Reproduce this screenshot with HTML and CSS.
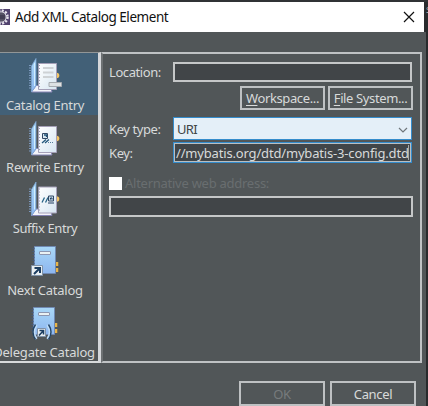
FILE: index.html
```html
<!DOCTYPE html>
<html lang="en">
<head>
<meta charset="utf-8">
<title>Add XML Catalog Element</title>
<link rel="stylesheet" href="styles.css">
</head>
<body>
<svg class="defs" width="0" height="0" aria-hidden="true">
  <defs>
    <linearGradient id="cover" x1="0" y1="0" x2="0" y2="1"><stop offset="0" stop-color="#a9d8f8"/><stop offset="1" stop-color="#8db6ef"/></linearGradient>
    <linearGradient id="paper" x1="0" y1="0" x2="1" y2="1"><stop offset="0" stop-color="#fff"/><stop offset="1" stop-color="#d7e6f2"/></linearGradient>
    <g id="open-book">
      <path d="M8.500 35 13 28.500H27L29 35z" fill="#f4f4fa" stroke="#8584b4"/>
      <path d="M8.500 9 13 1.500V29L8.500 35z" fill="url(#cover)" stroke="#7fa6d2" stroke-width=".8"/>
      <path d="M11.500 6V29" stroke="#d1efff"/>
      <path d="M7 8V33" stroke="#7e9ac0" stroke-width="2" stroke-dasharray="1 1.500"/>
      <circle cx="33.500" cy="18.500" r="2.800" fill="#f3c566"/>
      <path d="M15.500 6.500H33.500V32.500H15.500z" fill="url(#paper)" stroke="#a5a0b8"/>
      <path d="M16 8V31" stroke="#a3a2b7" stroke-width="2" stroke-dasharray="1 2"/>
    </g>
    <g id="closed-book">
      <path d="M34 20V30" stroke="#e9b447" stroke-width="2.500" stroke-dasharray="4 2"/>
      <path d="M11.500 4.500H32.500V31.500H11.500z" fill="url(#cover)" stroke="#7089b2"/>
      <path d="M10.500 6V30" stroke="#465b79" stroke-width="2" stroke-dasharray="1 2"/>
      <rect x="16.500" y="9.500" width="11" height="3" rx=".5" fill="#e9f1f3" stroke="#8c96b0"/>
    </g>
  </defs>
</svg>
<div class="screen">
  <div class="dialog">
    <header class="titlebar">
      <svg class="app-icon" width="10" height="16" viewBox="0 0 10 16"><path fill="#51426e" d="M0 0H10V16H0z"/><circle cx="1" cy="8" r="6.500" fill="none" stroke="#e8e6ed" stroke-width="2.500" stroke-dasharray="2 1.400"/><circle cx="1" cy="8" r="5.200" fill="#565365" stroke="#d4d0dc"/><path d="M0 7H5M0 9H5" stroke="#302a43"/></svg>
      <span class="title">Add XML Catalog Element</span>
      <svg class="close" width="12" height="12" viewBox="0 0 12 12"><path d="M1 1 11 11M11 1 1 11" stroke="#111" stroke-width="1.200"/></svg>
    </header>
    <main class="content">
      <nav class="sidebar">
        <div class="item selected"><svg width="42" height="39" viewBox="0 0 42 39"><use href="#open-book"/><path d="M20 11H30.500M20 15.500H30.500M20 20H30.500" stroke="#ced2d5" stroke-width="2"/><path d="M26 25.500H38.500V29.500H26z" fill="#dde1e4" stroke="#a6abb0"/></svg><span class="t-catalog">Catalog Entry</span></div>
        <div class="item"><svg width="42" height="39" viewBox="0 0 42 39"><g transform="translate(0 1)"><use href="#open-book"/><path d="M19.500 13.500H24.500V18.500H19.500z" fill="#d8e6ef" stroke="#334965"/><path d="M21 15H23.500V17M19 23 23 19.500M22 23 26 19.500" fill="none" stroke="#23577c" stroke-width="1.300"/><path d="M25 22.500H31" stroke="#577e9c" stroke-dasharray="1 1"/></g></svg><span class="t-rewrite">Rewrite Entry</span></div>
        <div class="item"><svg width="42" height="39" viewBox="0 0 42 39"><g transform="translate(0 .5)"><use href="#open-book"/><path d="M19 22 21.500 17M22.500 22 25 17" stroke="#286487" stroke-width="1.300"/><path d="M25.500 15.500H30.500V20.500H25.500z" fill="#c7dce9" stroke="#334965"/><path d="M27.500 19V17.500H29V19M25 22.500H31" fill="none" stroke="#203d61"/></g></svg><span class="t-suffix">Suffix Entry</span></div>
        <div class="item"><svg width="42" height="39" viewBox="0 0 42 39"><use href="#closed-book"/><path d="M8.500 23.500H19.500V33.500H8.500z" fill="#e9eff2" stroke="#8093a9"/><path d="M11 32 17 26M11.500 26H17V31" fill="none" stroke="#1c3e62" stroke-width="2"/></svg><span class="t-next">Next Catalog</span></div>
        <div class="item"><svg width="42" height="39" viewBox="0 0 42 39"><use href="#closed-book" x="-1" y="-1"/><path d="M14.500 24.500H22.500V32.500H14.500z" fill="#e9eff2" stroke="#8093a9"/><path d="M16 31.500 20.500 26.500M16.500 26.500H20.500V30.500" fill="none" stroke="#1c3e62" stroke-width="1.600"/><path d="M13.500 21Q8.500 28 13.500 35M24.500 21Q29.500 28 24.500 35" fill="none" stroke="#bfdcf7" stroke-width="2.500"/><path d="M12.500 20.500Q7.500 28 12.500 35.500M25.500 20.500Q30.500 28 25.500 35.500" fill="none" stroke="#234465" stroke-width="1.400"/></svg><span class="t-delegate">Delegate Catalog</span></div>
      </nav>
      <section class="panel">
        <div class="row location"><label>Location:</label><div class="field"></div></div>
        <div class="browse"><button><span><u>W</u>orkspace...</span></button><button><span><u>F</u>ile System...</span></button></div>
        <div class="row type"><label>Key type:</label><div class="select"><span>URI</span><svg width="10" height="7" viewBox="0 0 10 7"><path d="M1 1 5 5 9 1" fill="none" stroke="#70777c" stroke-width="1.200"/></svg></div></div>
        <div class="row key"><label>Key:</label><div class="field focused"><span class="value">//mybatis.org/dtd/mybatis-3-config.dtd</span><i class="caret"></i></div></div>
        <div class="alternative"><i class="checkbox"></i><span>Alternative web address:</span></div>
        <div class="field address"></div>
      </section>
    </main>
    <footer class="actions"><button class="disabled">OK</button><button>Cancel</button></footer>
  </div>
  <aside class="backdrop"><span>s</span></aside>
</div>
</body>
</html>
```
FILE: styles.css
```css
* { box-sizing: border-box; }
body { margin: 0; overflow: hidden; font: 13px/18px "Noto Sans", sans-serif; letter-spacing: -.23px; color: #d8dada; }
.defs { position: absolute; }
.screen { display: flex; width: 428px; height: 406px; padding-top: 2px; background: #303235; }
.dialog { width: 426px; flex: none; display: flex; flex-direction: column; background: #515658; }
.titlebar { height: 30px; width: 426px; flex: none; display: flex; align-items: center; background: #fff; border-right: 2px solid #292b2d; color: #111; }
.title { margin-left: 5px; font-size: 13.5px; letter-spacing: -.45px; }
.close { margin-left: auto; margin-right: 9px; }
.content { display: flex; height: 311px; flex: none; margin-top: 20px; }
.sidebar { width: 101px; height: 311px; flex: none; overflow: hidden; border-top: 1px solid #929697; border-right: 3px solid #d5d7da; border-bottom: 2px solid #d8dadb; }
.item { width: 98px; height: 61.7px; padding-top: 4px; display: flex; flex-direction: column; align-items: center; }
.selected { background: #426077; }
.item svg { flex: none; margin-left: -10px; }
.item span { margin-left: -8px; white-space: nowrap; }
.t-catalog { letter-spacing: -.3px; }
.t-rewrite { letter-spacing: -.28px; }
.t-suffix { letter-spacing: -.42px; }
.t-next { letter-spacing: -.25px; }
.item .t-delegate { letter-spacing: -.2px; margin-left: -10px; }
.panel { width: 321px; height: 311px; border: 2px solid #bfc2c4; border-left-color: #6c7072; padding: 8px 8px 0 6px; }
.row { display: grid; grid-template-columns: 64px 239px; align-items: center; }
.row label { letter-spacing: -.42px; }
.field { height: 20px; border: 2px solid #c5c7c8; background: #414548; }
.location { height: 20px; }
.browse { display: flex; justify-content: flex-end; gap: 3px; margin-top: 4px; margin-right: -1px; }
button { height: 24px; width: 85px; padding: 0; border: 2px solid #bec1c3; border-radius: 0; background: #515658; color: #d8dada; font: inherit; letter-spacing: -.35px; white-space: nowrap; display: flex; justify-content: center; align-items: center; }
.browse button { letter-spacing: -.38px; }
u { text-decoration: underline; text-underline-offset: 2px; }
.type { margin-top: 7px; height: 23px; }
.select { height: 23px; padding: 0 3px; display: flex; align-items: center; justify-content: space-between; border: 1px solid #348ccc; background: #e4eff8; color: #404446; letter-spacing: -.7px; }
.select svg { margin-top: 3px; }
.key { margin-top: 2px; height: 21px; }
.focused { height: 21px; border: 1px solid #348ccc; box-shadow: inset 0 0 0 1px #b8bec2; padding-left: 2px; display: flex; align-items: center; }
.value { white-space: nowrap; width: 232px; flex: none; letter-spacing: -.17px; }
.caret { flex: none; width: 1px; height: 15px; background: #a6a8a8; }
.alternative { display: flex; align-items: center; gap: 3px; height: 18px; margin-top: 11px; color: #696e70; letter-spacing: -.26px; }
.checkbox { width: 13px; height: 13px; background: #fff; }
.address { margin-top: 4px; height: 21px; width: 304px; }
.actions { display: flex; justify-content: flex-end; gap: 5px; margin-top: 18px; padding-right: 10px; }
.actions button { width: 86px; height: 25px; }
.actions .disabled { color: #777b7d; }
.backdrop { flex: 1; background: #292b2d; overflow: hidden; color: #a4a6a7; font-size: 10px; line-height: 14px; }
```
